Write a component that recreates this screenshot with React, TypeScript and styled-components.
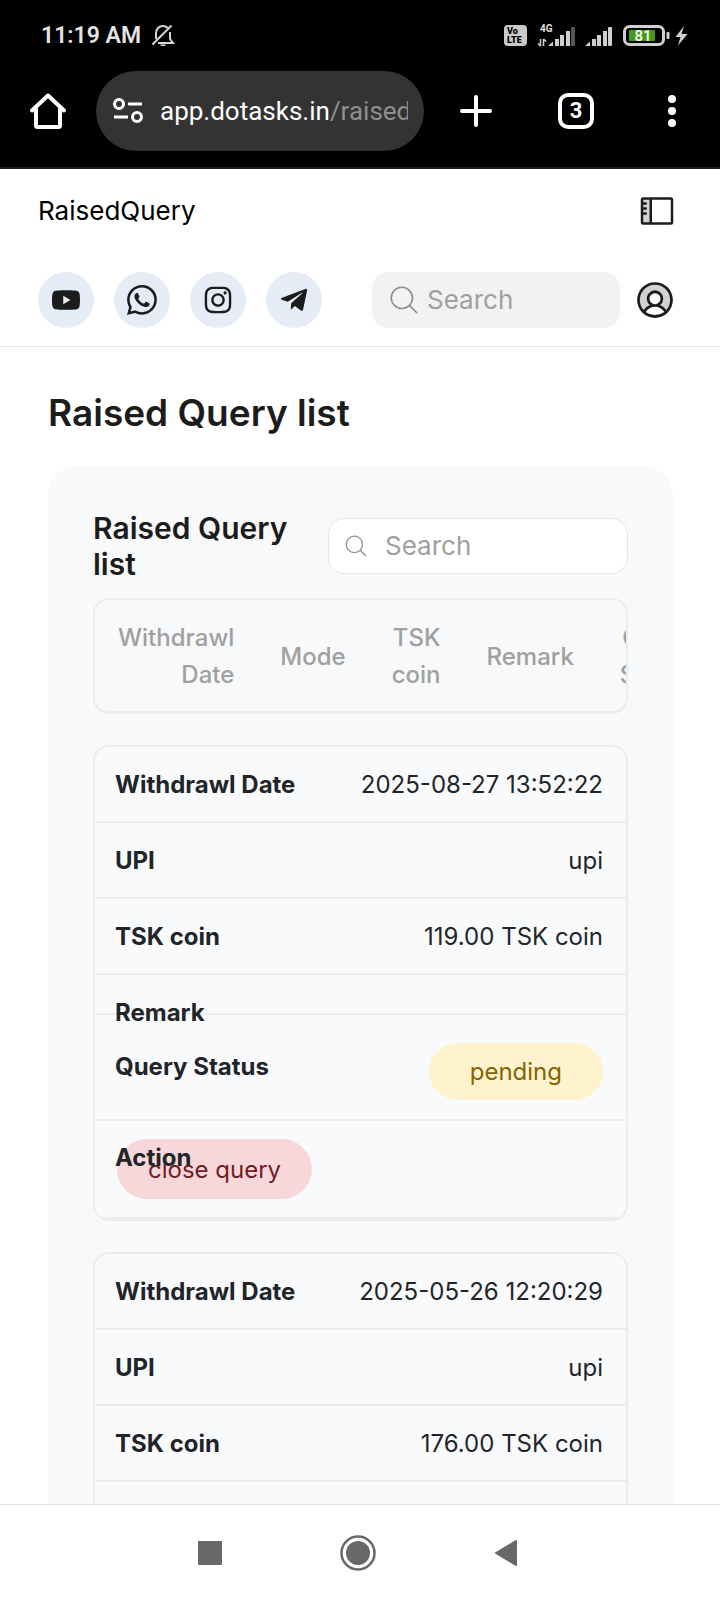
import React from 'react';
import styled, { createGlobalStyle } from 'styled-components';
import { AiFillYoutube, AiOutlineInstagram } from 'react-icons/ai';
import { BsWhatsapp } from 'react-icons/bs';
import { FaTelegramPlane } from 'react-icons/fa';
import {
  PiMagnifyingGlassLight,
  PiSidebarDuotone,
  PiUserCircleDuotone,
} from 'react-icons/pi';

const GlobalStyle = createGlobalStyle`
  *, *::before, *::after { box-sizing: border-box; }
  body { margin: 0; background: #fff; font-optical-sizing: none; }
  button { border: 0; padding: 0; background: none; font: inherit; color: inherit; cursor: pointer; }
  h1, h2, p { margin: 0; }
  svg { display: block; }
`;

const Screen = styled.div`
  display: flex;
  flex-direction: column;
  height: 100vh;
  font-family: Inter, 'Noto Sans', sans-serif;
  color: #1c1c1c;
`;

const BrowserChrome = styled.header`
  flex: none;
  background: #000;
  color: #fff;
  font-family: Roboto, sans-serif;
  border-bottom: 2px solid #1b1b1b;
`;

const StatusBar = styled.div`
  display: flex;
  justify-content: space-between;
  align-items: center;
  height: 71px;
  padding: 0 32px 0 41px;
  color: #e4e4e4;
`;

const StatusGroup = styled.div<{ $gap: number }>`
  display: flex;
  align-items: center;
  gap: ${({ $gap }) => $gap}px;
`;

const Clock = styled.span`
  font-size: 23px;
  font-weight: 600;
  line-height: 28px;
`;

const Toolbar = styled.div`
  display: flex;
  align-items: center;
  height: 96px;
  padding: 0 36px 16px 30px;
`;

const AddressBar = styled.button`
  display: flex;
  flex: 1;
  align-items: center;
  gap: 16px;
  min-width: 0;
  height: 80px;
  margin: 0 36px 0 30px;
  padding: 0 16px;
  border-radius: 40px;
  background: #333;
`;

const Address = styled.span`
  flex: 1;
  overflow: hidden;
  white-space: nowrap;
  text-align: left;
  font-size: 26px;
  line-height: 36px;
  color: #fff;
`;

const AddressPath = styled.span`
  color: #8f8f8f;
`;

const ToolbarActions = styled.div`
  display: flex;
  align-items: center;
  gap: 66px;
`;

const ToolbarButton = styled.button`
  display: grid;
  place-items: center;
  min-width: 24px;
  height: 40px;
`;

const TabCount = styled.span`
  display: grid;
  place-items: center;
  width: 36px;
  height: 36px;
  border: 4px solid #fff;
  border-radius: 10px;
  font-size: 22px;
  font-weight: 700;
  line-height: 24px;
`;

const Page = styled.div`
  flex: 1;
  min-height: 0;
  overflow-y: auto;
  scrollbar-width: none;
  background: #fff;
`;

const PageHeader = styled.div`
  padding: 0 43px 0 38px;
  border-bottom: 1px solid #e5e5e5;
`;

const HeaderRow = styled.div<{ $height: number }>`
  display: flex;
  align-items: center;
  justify-content: space-between;
  height: ${({ $height }) => $height}px;
`;

const Crumb = styled.p`
  font-size: 26px;
  line-height: 40px;
  color: #000;
`;

const IconButton = styled.button`
  display: grid;
  place-items: center;
`;

const SocialLinks = styled.nav`
  display: flex;
  gap: 20px;
`;

const SocialLink = styled.a`
  display: grid;
  place-items: center;
  width: 56px;
  height: 56px;
  border-radius: 50%;
  background: #e5ecf6;
  color: #1c1c1c;
`;

const HeaderTools = styled.div`
  display: flex;
  align-items: center;
  gap: 13px;
`;

const SearchField = styled.label<{ $outlined?: boolean }>`
  display: flex;
  align-items: center;
  gap: ${({ $outlined }) => ($outlined ? 16 : 6)}px;
  width: ${({ $outlined }) => ($outlined ? 300 : 248)}px;
  height: 56px;
  padding: 0 14px;
  border: 1px solid ${({ $outlined }) => ($outlined ? '#e6e6e6' : '#f2f2f2')};
  border-radius: 16px;
  background: ${({ $outlined }) => ($outlined ? '#fff' : '#f2f2f2')};
  color: #8f8f8f;

  svg { flex: none; }
`;

const SearchInput = styled.input`
  flex: 1;
  min-width: 0;
  padding: 0;
  border: 0;
  outline: 0;
  background: none;
  font: 400 26px/36px Inter, sans-serif;
  font-optical-sizing: none;
  color: #1c1c1c;

  &::placeholder { color: #a0a0a0; opacity: 1; }
`;

const Content = styled.main`
  padding: 42px 47px 0 48px;
`;

const Title = styled.h1`
  font-size: 37px;
  font-weight: 600;
  line-height: 48px;
`;

const Panel = styled.section`
  margin-top: 29px;
  padding: 44px 45px;
  border-radius: 30px;
  background: #f7f9fb;
`;

const PanelHead = styled.div`
  display: flex;
  align-items: center;
  justify-content: space-between;
  gap: 24px;
  margin-bottom: 16px;
`;

const PanelTitle = styled.h2`
  font-size: 30px;
  font-weight: 600;
  line-height: 36px;
`;

const QueryTable = styled.table`
  display: block;
  font-size: 24px;
  line-height: 37px;
`;

const TableHead = styled.thead`
  display: block;
  overflow: hidden;
  border: 2px solid #ebecee;
  border-bottom-width: 3px;
  border-radius: 16px;
`;

const HeadRow = styled.tr`
  display: flex;
  align-items: center;
  height: 111px;
`;

const HeadCell = styled.th`
  flex: none;
  width: min-content;
  padding: 1px 23px 0;
  font-weight: 500;
  text-align: right;
  color: #a0a0a0;
`;

const TableBody = styled.tbody`
  display: block;
`;

const QueryCard = styled.tr`
  display: block;
  overflow: hidden;
  margin-top: 31px;
  border: 2px solid #ebecee;
  border-radius: 16px;
  background: #f9fafc;
`;

/* Label and value share one grid area, so a label can overlap its value. */
const Field = styled.td<{ $height: number; $pad?: number }>`
  display: grid;
  align-items: start;
  height: ${({ $height }) => $height}px;
  padding: ${({ $pad = 19 }) => $pad}px 23px 0 20px;
  border-bottom: 2px solid #ebecee;
  color: #212529;

  > * { grid-area: 1 / 1; }
`;

const FieldLabel = styled.span<{ $lowered?: boolean }>`
  z-index: 1;
  justify-self: start;
  padding-top: ${({ $lowered }) => ($lowered ? 5 : 0)}px;
  font-weight: 700;
  pointer-events: none;
`;

const FieldValue = styled.span`
  justify-self: end;
`;

const StatusPill = styled.span`
  justify-self: end;
  align-self: start;
  padding: 10px 41px;
  border-radius: 30px;
  background: #fff3cd;
  color: #856404;
`;

const ClosePill = styled.button`
  justify-self: start;
  height: 60px;
  margin-left: 2px;
  padding: 0 31px;
  border-radius: 30px;
  background: #f8d7da;
  color: #721c24;
`;

const SystemNav = styled.nav`
  display: flex;
  flex: none;
  align-items: center;
  justify-content: space-between;
  height: 96px;
  padding: 0 28% 0 27.5%;
  border-top: 1px solid #e2e2e2;
  background: #fff;
`;

const BellOffIcon = () => (
  <svg width="24" height="24" viewBox="0 0 24 24" fill="none" stroke="#d6d6d6" strokeWidth="2" aria-hidden="true">
    <path d="M5 15V9.500C5 5 8 2 12 2c2 0 3.500.700 4.800 2M19 8v7l3 4H7" />
    <path d="M1.500 20.500 20.500 1.500" />
    <path d="M9 20.500h6l-1.200 1.500h-3.600z" fill="#d6d6d6" stroke="none" />
  </svg>
);

const VolteIcon = () => (
  <svg width="23" height="21" viewBox="0 0 23 21" aria-hidden="true">
    <rect width="23" height="21" rx="4" fill="#c9c9c9" />
    <g fill="#000" fontFamily="Roboto, sans-serif" fontWeight="900" fontSize="9">
      <text x="3" y="9">Vo</text>
      <text x="3" y="18">LTE</text>
    </g>
  </svg>
);

const Bars = ({ x, dim }: { x: number; dim?: boolean }) => (
  <g fill="#cfcfcf">
    <path d={`M${x} 22 L${x + 5} 17.500 V22z`} />
    <rect x={x + 7} y="15" width="4" height="7" />
    <rect x={x + 12} y="11" width="4" height="11" />
    <rect x={x + 18} y="7" width="4" height="15" />
    <rect x={x + 23} y="3" width="4" height="19" rx="1" fill={dim ? '#555' : '#cfcfcf'} />
  </g>
);

const SignalIcon = () => (
  <svg width="76" height="24" viewBox="0 0 76 24" aria-hidden="true">
    <text x="3" y="8" fill="#e0e0e0" fontFamily="Roboto, sans-serif" fontWeight="700" fontSize="10">4G</text>
    <path d="M3.500 15v7M1 19.500l2.500 2.500M6.500 22v-7M9 17.500l-2.500-2.500" stroke="#cfcfcf" strokeWidth="1.500" fill="none" />
    <Bars x={11} dim />
    <Bars x={48} />
  </svg>
);

const BatteryIcon = () => (
  <svg width="65" height="22" viewBox="0 0 65 22" aria-hidden="true">
    <rect x="1.500" y="1.500" width="39" height="18" rx="5" fill="none" stroke="#cfcfcf" strokeWidth="3" />
    <rect x="43.500" y="7" width="3" height="7" rx="1" fill="#cfcfcf" />
    <rect x="6" y="5" width="26" height="11" rx="1" fill="#469a17" />
    <text x="20" y="16" textAnchor="middle" fill="#fff" fontFamily="Roboto, sans-serif" fontWeight="500" fontSize="15">81</text>
    <path d="M61 1 52.500 12h5L55 20.500 64.500 9h-6z" fill="#cfcfcf" />
  </svg>
);

const HomeIcon = () => (
  <svg width="36" height="36" viewBox="0 0 36 36" fill="none" stroke="#fff" strokeWidth="4" strokeLinecap="round" strokeLinejoin="round" aria-hidden="true">
    <path d="M2 17.500 18 2.500 34 17.500" />
    <path d="M6 16v16.500a1.500 1.500 0 0 0 1.500 1.500h21a1.500 1.500 0 0 0 1.500-1.500V16" />
  </svg>
);

const SiteSettingsIcon = () => (
  <svg width="32" height="26" viewBox="0 0 32 26" fill="none" stroke="#fff" strokeWidth="3" aria-hidden="true">
    <circle cx="7" cy="6" r="4.500" />
    <path d="M16 6h14M2 19h14" />
    <circle cx="25" cy="19" r="4.500" />
  </svg>
);

const PlusIcon = () => (
  <svg width="32" height="32" viewBox="0 0 32 32" stroke="#fff" strokeWidth="4" strokeLinecap="round" aria-hidden="true">
    <path d="M16 2v28M2 16h28" />
  </svg>
);

const MoreIcon = () => (
  <svg width="8" height="32" viewBox="0 0 8 32" fill="#fff" overflow="visible" aria-hidden="true">
    <circle cx="4" cy="4" r="4" />
    <circle cx="4" cy="16" r="4" />
    <circle cx="4" cy="28" r="4" />
  </svg>
);

const socials = [
  { name: 'YouTube', icon: <AiFillYoutube size={32} /> },
  { name: 'WhatsApp', icon: <BsWhatsapp size={30} /> },
  { name: 'Instagram', icon: <AiOutlineInstagram size={34} /> },
  { name: 'Telegram', icon: <FaTelegramPlane size={30} /> },
];

const columns = ['Withdrawl Date', 'Mode', 'TSK coin', 'Remark', 'Query Status', 'Action'];

const queries = [
  { date: '2025-08-27 13:52:22', mode: 'upi', amount: '119.00 TSK coin', status: 'pending' },
  { date: '2025-05-26 12:20:29', mode: 'upi', amount: '176.00 TSK coin', status: 'pending' },
];

export default function App() {
  return (
    <Screen>
      <GlobalStyle />
      <BrowserChrome>
        <StatusBar>
          <StatusGroup $gap={10}>
            <Clock>11:19 AM</Clock>
            <BellOffIcon />
          </StatusGroup>
          <StatusGroup $gap={10}>
            <VolteIcon />
            <SignalIcon />
            <BatteryIcon />
          </StatusGroup>
        </StatusBar>
        <Toolbar>
          <ToolbarButton aria-label="Home"><HomeIcon /></ToolbarButton>
          <AddressBar>
            <SiteSettingsIcon />
            <Address>app.dotasks.in<AddressPath>/raised</AddressPath></Address>
          </AddressBar>
          <ToolbarActions>
            <ToolbarButton aria-label="New tab"><PlusIcon /></ToolbarButton>
            <ToolbarButton aria-label="Open tabs"><TabCount>3</TabCount></ToolbarButton>
            <ToolbarButton aria-label="More options"><MoreIcon /></ToolbarButton>
          </ToolbarActions>
        </Toolbar>
      </BrowserChrome>

      <Page>
        <PageHeader>
          <HeaderRow $height={84}>
            <Crumb>RaisedQuery</Crumb>
            <IconButton aria-label="Toggle sidebar"><PiSidebarDuotone size={40} /></IconButton>
          </HeaderRow>
          <HeaderRow $height={93}>
            <SocialLinks aria-label="Social links">
              {socials.map(({ name, icon }) => (
                <SocialLink key={name} href="#" aria-label={name}>{icon}</SocialLink>
              ))}
            </SocialLinks>
            <HeaderTools>
              <SearchField>
                <PiMagnifyingGlassLight size={34} />
                <SearchInput type="search" placeholder="Search" aria-label="Search" />
              </SearchField>
              <IconButton aria-label="Account"><PiUserCircleDuotone size={44} /></IconButton>
            </HeaderTools>
          </HeaderRow>
        </PageHeader>

        <Content>
          <Title>Raised Query list</Title>
          <Panel>
            <PanelHead>
              <PanelTitle>Raised Query list</PanelTitle>
              <SearchField $outlined>
                <PiMagnifyingGlassLight size={26} />
                <SearchInput type="search" placeholder="Search" aria-label="Search queries" />
              </SearchField>
            </PanelHead>
            <QueryTable>
              <TableHead>
                <HeadRow>
                  {columns.map((column) => (
                    <HeadCell key={column} scope="col">{column}</HeadCell>
                  ))}
                </HeadRow>
              </TableHead>
              <TableBody>
                {queries.map((query) => (
                  <QueryCard key={query.date}>
                    <Field $height={76}>
                      <FieldLabel>Withdrawl Date</FieldLabel>
                      <FieldValue>{query.date}</FieldValue>
                    </Field>
                    <Field $height={76}>
                      <FieldLabel>UPI</FieldLabel>
                      <FieldValue>{query.mode}</FieldValue>
                    </Field>
                    <Field $height={76}>
                      <FieldLabel>TSK coin</FieldLabel>
                      <FieldValue>{query.amount}</FieldValue>
                    </Field>
                    <Field $height={40}>
                      <FieldLabel>Remark</FieldLabel>
                    </Field>
                    <Field $height={106} $pad={28}>
                      <FieldLabel $lowered>Query Status</FieldLabel>
                      <StatusPill>{query.status}</StatusPill>
                    </Field>
                    <Field $height={98} $pad={18}>
                      <FieldLabel>Action</FieldLabel>
                      <ClosePill>close query</ClosePill>
                    </Field>
                  </QueryCard>
                ))}
              </TableBody>
            </QueryTable>
          </Panel>
        </Content>
      </Page>

      <SystemNav aria-label="System navigation">
        <IconButton aria-label="Recent apps">
          <svg width="24" height="24" viewBox="0 0 24 24" aria-hidden="true">
            <rect width="24" height="24" rx="1" fill="#686868" />
          </svg>
        </IconButton>
        <IconButton aria-label="Home screen">
          <svg width="36" height="36" viewBox="0 0 36 36" aria-hidden="true">
            <circle cx="18" cy="18" r="16.500" fill="none" stroke="#686868" strokeWidth="2.500" />
            <circle cx="18" cy="18" r="12" fill="#686868" />
          </svg>
        </IconButton>
        <IconButton aria-label="Back">
          <svg width="24" height="28" viewBox="0 0 24 28" aria-hidden="true">
            <path d="M22 2v24L2 14z" fill="#686868" stroke="#686868" strokeWidth="2" strokeLinejoin="round" />
          </svg>
        </IconButton>
      </SystemNav>
    </Screen>
  );
}
